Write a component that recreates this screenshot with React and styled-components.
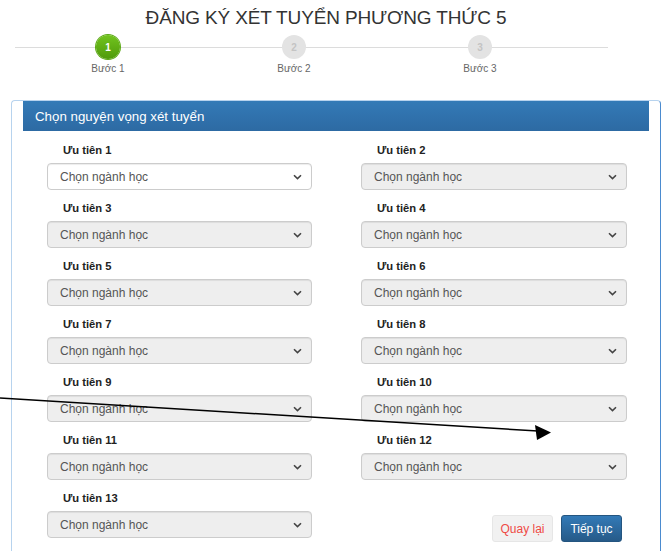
import React from 'react';
import styled, { createGlobalStyle } from 'styled-components';

const GlobalStyle = createGlobalStyle`
  html, body {
    margin: 0;
    padding: 0;
    background: #fff;
  }
  body {
    font-family: "Liberation Sans", Arial, sans-serif;
    color: #333;
  }
`

const Page = styled.div`
  position: relative;
  width: 670px;
  height: 551px;
  overflow: hidden;
  padding-top: 6px;
  box-sizing: border-box;
`

const Title = styled.h1`
  margin: 0;
  font-size: 19px;
  line-height: 24px;
  letter-spacing: -0.15px;
  font-weight: normal;
  text-align: center;
  color: #333;
  padding-right: 18px;
`

const Stepper = styled.div`
  position: relative;
  display: flex;
  width: 593px;
  margin: 5px 0 0 15px;
  &::before {
    content: '';
    position: absolute;
    left: 0;
    right: 0;
    top: 12px;
    height: 1px;
    background: #dcdcdc;
  }
`

const Step = styled.div`
  position: relative;
  width: 186px;
  display: flex;
  flex-direction: column;
  align-items: center;
`

const Dot = styled.div`
  width: 24px;
  height: 24px;
  border-radius: 50%;
  display: flex;
  align-items: center;
  justify-content: center;
  font-size: 10px;
  font-weight: bold;
  color: ${p => (p.$active ? '#fff' : '#c4c4c4')};
  background: ${p => (p.$active ? 'linear-gradient(#72c41f, #4f9a0a)' : '#e3e3e3')};
  box-shadow: ${p => (p.$active ? '0 0 0 1px #5aa812' : 'none')};
`

const StepLabel = styled.div`
  margin-top: 4px;
  font-size: 10px;
  line-height: 12px;
  color: #666;
`

const Panel = styled.div`
  margin: 25px 0 0 11px;
  width: 650px;
  box-sizing: border-box;
  border: 1px solid #b7d3ee;
  border-right-color: #4b8bcf;
  border-bottom: none;
  border-radius: 4px 4px 0 0;
  padding-bottom: 20px;
`

const PanelHeading = styled.div`
  margin: 0 11px;
  height: 30px;
  padding-left: 12px;
  display: flex;
  align-items: center;
  font-size: 13.3px;
  color: #fff;
  background: linear-gradient(#337ab7, #2d6aa3);
`

const Grid = styled.div`
  display: grid;
  grid-template-columns: 265px 266px;
  column-gap: 49px;
  row-gap: 11px;
  padding: 12px 32px 0 35px;
`

const Field = styled.div`
  display: flex;
  flex-direction: column;
`

const Label = styled.label`
  margin: 0 0 5px 16px;
  font-size: 11.2px;
  line-height: 15px;
  font-weight: bold;
  color: #222;
`

const Select = styled.div`
  height: 27px;
  box-sizing: border-box;
  border: 1px solid #ccc;
  border-radius: 4px;
  padding: 0 9px 0 12px;
  display: flex;
  align-items: center;
  justify-content: space-between;
  font-size: 12px;
  color: #555;
  background: ${p => (p.$disabled ? '#eee' : '#fff')};
  box-shadow: inset 0 1px 1px rgba(0, 0, 0, 0.075);
`

const Actions = styled.div`
  display: flex;
  justify-content: flex-end;
  gap: 8px;
  padding: 24px 5px 0 0;
`

const Button = styled.button`
  height: 27px;
  width: 61px;
  border-radius: 3px;
  font-family: inherit;
  font-size: 12px;
  padding: 0;
  cursor: pointer;
  border: 1px solid ${p => (p.$primary ? '#245580' : '#e6e6e6')};
  color: ${p => (p.$primary ? '#fff' : '#ef4a45')};
  background: ${p => (p.$primary ? 'linear-gradient(#337ab7, #265a88)' : '#f1f1f1')};
`

const Pointer = styled.svg`
  position: absolute;
  left: 0;
  top: 0;
  pointer-events: none;
`

function Chevron() {
  return (
    <svg width="9" height="6" viewBox="0 0 9 6">
      <path d="M1 1.2 L4.5 4.6 L8 1.2" fill="none" stroke="#444" strokeWidth="1.6" />
    </svg>
  );
}

const steps = ['Bước 1', 'Bước 2', 'Bước 3'];
const priorities = Array.from({ length: 13 }, (_, i) => i + 1);

export default function App() {
  return (
    <Page>
      <GlobalStyle />
      <Title>ĐĂNG KÝ XÉT TUYỂN PHƯƠNG THỨC 5</Title>
      <Stepper>
        {steps.map((s, i) => (
          <Step key={s}>
            <Dot $active={i === 0}>{i + 1}</Dot>
            <StepLabel>{s}</StepLabel>
          </Step>
        ))}
      </Stepper>
      <Panel>
        <PanelHeading>Chọn nguyện vọng xét tuyển</PanelHeading>
        <Grid>
          {priorities.map(n => (
            <Field key={n}>
              <Label>Ưu tiên {n}</Label>
              <Select $disabled={n > 1}>
                <span>Chọn ngành học</span>
                <Chevron />
              </Select>
            </Field>
          ))}
          <Actions>
            <Button>Quay lại</Button>
            <Button $primary>Tiếp tục</Button>
          </Actions>
        </Grid>
      </Panel>
      <Pointer width="670" height="551" viewBox="0 0 670 551">
        <line x1="0" y1="398" x2="538" y2="431" stroke="#000" strokeWidth="1.5" />
        <polygon points="551,432.5 535,425 537,440" fill="#000" />
      </Pointer>
    </Page>
  );
}
